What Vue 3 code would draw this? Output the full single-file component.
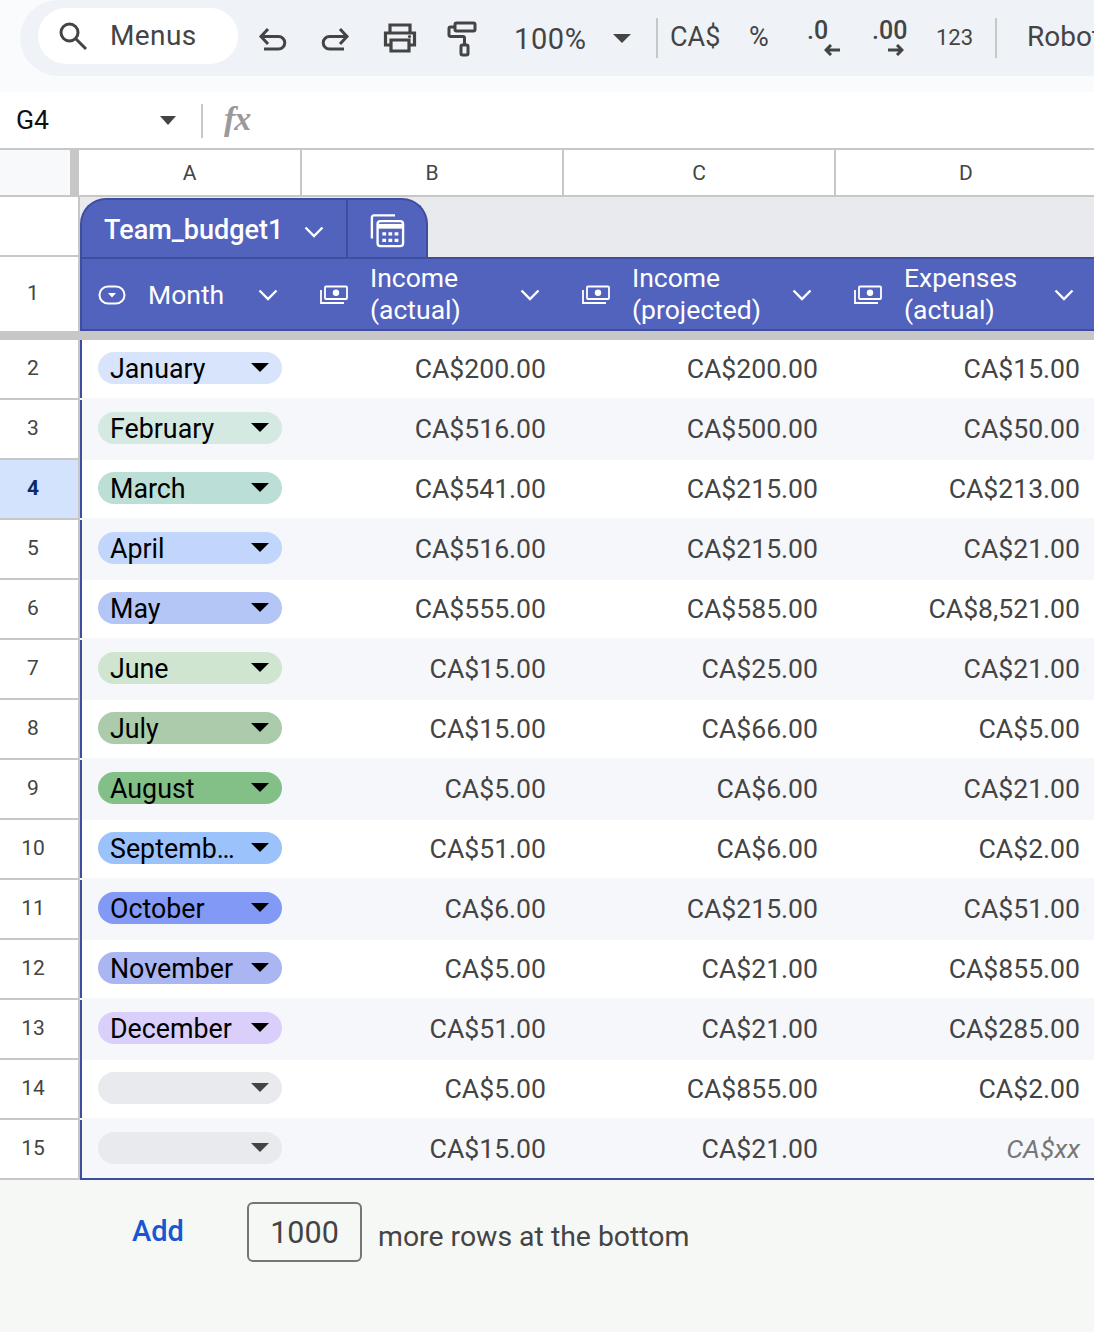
<script setup>
const rows = [
  { n: 2, m: 'January', c: '#d7e4fc', b: 'CA$200.00', p: 'CA$200.00', e: 'CA$15.00' },
  { n: 3, m: 'February', c: '#d4e9e2', b: 'CA$516.00', p: 'CA$500.00', e: 'CA$50.00' },
  { n: 4, m: 'March', c: '#bbdfd6', b: 'CA$541.00', p: 'CA$215.00', e: 'CA$213.00' },
  { n: 5, m: 'April', c: '#c2d6fc', b: 'CA$516.00', p: 'CA$215.00', e: 'CA$21.00' },
  { n: 6, m: 'May', c: '#b3c6f6', b: 'CA$555.00', p: 'CA$585.00', e: 'CA$8,521.00' },
  { n: 7, m: 'June', c: '#cfe5d0', b: 'CA$15.00', p: 'CA$25.00', e: 'CA$21.00' },
  { n: 8, m: 'July', c: '#abcbab', b: 'CA$15.00', p: 'CA$66.00', e: 'CA$5.00' },
  { n: 9, m: 'August', c: '#83c088', b: 'CA$5.00', p: 'CA$6.00', e: 'CA$21.00' },
  { n: 10, m: 'Septemb…', c: '#9cc2fc', b: 'CA$51.00', p: 'CA$6.00', e: 'CA$2.00' },
  { n: 11, m: 'October', c: '#829af6', b: 'CA$6.00', p: 'CA$215.00', e: 'CA$51.00' },
  { n: 12, m: 'November', c: '#aab6f2', b: 'CA$5.00', p: 'CA$21.00', e: 'CA$855.00' },
  { n: 13, m: 'December', c: '#dacffb', b: 'CA$51.00', p: 'CA$21.00', e: 'CA$285.00' },
  { n: 14, m: '', c: '#e8eaed', b: 'CA$5.00', p: 'CA$855.00', e: 'CA$2.00' },
  { n: 15, m: '', c: '#e8eaed', b: 'CA$15.00', p: 'CA$21.00', e: 'CA$xx', it: true },
]
const heads = [
  { l1: 'Income', l2: '(actual)' },
  { l1: 'Income', l2: '(projected)' },
  { l1: 'Expenses', l2: '(actual)' },
]
</script>

<template>
  <div class="page">
    <div class="topband">
      <div class="toolbar">
        <div class="search">
          <svg class="search-ic" width="32" height="32" viewBox="0 0 32 32" fill="none" stroke="#444" stroke-width="3">
            <circle cx="12.5" cy="12.5" r="8.5" />
            <path d="M18.5 18.5L29 29" />
          </svg>
          <span class="search-t">Menus</span>
        </div>
        <svg class="i-undo" width="30" height="30" viewBox="0 0 30 30" fill="none" stroke="#444" stroke-width="3">
          <path d="M10 5L3 12.500L10 20" />
          <path d="M3 12.500H20.500a6.300 6.300 0 0 1 0 12.600H6" />
        </svg>
        <svg class="i-redo" width="30" height="30" viewBox="0 0 30 30" fill="none" stroke="#444" stroke-width="3">
          <path d="M20 5L27 12.500L20 20" />
          <path d="M27 12.500H9.500a6.300 6.300 0 0 0 0 12.600H24" />
        </svg>
        <svg class="i-print" width="36" height="32" viewBox="0 0 36 32" fill="none" stroke="#444" stroke-width="3.200">
          <path d="M8 11V3H28V11" />
          <path d="M8 23H3.500V11H32.500V23H28" />
          <path d="M9 18H27V29H9Z" />
          <circle cx="27.500" cy="14.500" r="1.600" fill="#444" stroke="none" />
        </svg>
        <svg class="i-paint" width="32" height="36" viewBox="0 0 32 36" fill="none" stroke="#444" stroke-width="3">
          <rect x="9" y="2" width="20" height="8" rx="1.500" />
          <path d="M9 6H4.500a1.500 1.500 0 0 0-1.500 1.500V14a1.500 1.500 0 0 0 1.500 1.500H17a1.500 1.500 0 0 1 1.500 1.500V23" />
          <rect x="15" y="24" width="7" height="10" rx="1.500" />
        </svg>
        <span class="zoom">100%</span>
        <span class="caret dark zoom-c"></span>
        <span class="vdiv d1"></span>
        <span class="tb-t cad">CA$</span>
        <span class="tb-t pct">%</span>
        <div class="dec d-less">
          <span class="dec-t">.0</span>
          <svg class="arr-l" width="16" height="12" viewBox="0 0 16 12" fill="none" stroke="#444" stroke-width="3">
            <path d="M16 6H2M7 1L2 6L7 11" />
          </svg>
        </div>
        <div class="dec d-more">
          <span class="dec-t">.00</span>
          <svg class="arr-r" width="16" height="12" viewBox="0 0 16 12" fill="none" stroke="#444" stroke-width="3">
            <path d="M0 6H14M9 1L14 6L9 11" />
          </svg>
        </div>
        <span class="tb-t n123">123</span>
        <span class="vdiv d2"></span>
        <span class="tb-t font">Roboto</span>
      </div>
    </div>

    <div class="fbar">
      <span class="cellref">G4</span>
      <span class="caret dark ref-c"></span>
      <span class="fdiv"></span>
      <span class="fx">fx</span>
    </div>

    <div class="colhead">
      <div class="corner"></div>
      <div class="ch ca">A</div>
      <div class="ch cb">B</div>
      <div class="ch cc">C</div>
      <div class="ch cd">D</div>
    </div>

    <div class="tabrow">
      <div class="rh rh-tab"></div>
      <div class="tabzone">
        <div class="tab">
          <div class="tab-name">
            <span>Team_budget1</span>
            <svg class="chev" width="20" height="12" viewBox="0 0 20 12" fill="none" stroke="#fff" stroke-width="2.400"><path d="M1.500 1.500L10 10L18.500 1.500" /></svg>
          </div>
          <div class="tab-ic">
            <svg width="35" height="34" viewBox="0 0 36 36" fill="none" stroke="#fff" stroke-width="2.500">
              <path d="M1.500 26V3.500a2 2 0 0 1 2-2H26" />
              <rect x="7.500" y="7.500" width="27" height="26.500" rx="3" />
              <path d="M7.500 13H34.500" stroke-width="5" />
              <path d="M12.500 21h4M19 21h4M25.500 21h4M12.500 28h4M19 28h4M25.500 28h4" stroke-width="3.500" />
            </svg>
          </div>
        </div>
      </div>
    </div>

    <div class="headrow">
      <div class="rh rh-1">1</div>
      <div class="heads">
        <div class="hc ha">
          <svg class="ic" width="28" height="20" viewBox="0 0 28 20" fill="none" stroke="#fff" stroke-width="2">
            <rect x="1.500" y="1.500" width="25" height="17" rx="8.500" />
            <path d="M10 8H18L14 12.500Z" fill="#fff" stroke="none" />
          </svg>
          <span class="month">Month</span>
          <svg class="chev auto" width="20" height="12" viewBox="0 0 20 12" fill="none" stroke="#fff" stroke-width="2.400"><path d="M1.500 1.500L10 10L18.500 1.500" /></svg>
        </div>
        <div v-for="(h, i) in heads" :key="i" class="hc" :class="{ hd: i === 2 }">
          <svg class="ic" width="28" height="20" viewBox="0 0 28 20" fill="none" stroke="#fff" stroke-width="1.800">
            <path d="M1 5V18H24" />
            <rect x="5" y="1.500" width="22" height="12.500" rx="1" />
            <circle cx="16" cy="7.700" r="3.200" fill="#fff" stroke="none" />
          </svg>
          <span class="htxt">{{ h.l1 }}<br />{{ h.l2 }}</span>
          <svg class="chev auto" width="20" height="12" viewBox="0 0 20 12" fill="none" stroke="#fff" stroke-width="2.400"><path d="M1.500 1.500L10 10L18.500 1.500" /></svg>
        </div>
      </div>
    </div>
    <div class="freeze"></div>

    <div v-for="r in rows" :key="r.n" class="row">
      <div class="rh" :class="{ sel: r.n === 4 }">{{ r.n }}</div>
      <div class="data" :class="{ stripe: r.n % 2 === 1, last: r.n === 15 }">
        <div class="cell-a">
          <div class="chip" :style="{ background: r.c }">
            <span class="chip-t">{{ r.m }}</span>
            <span class="caret chip-c" :class="r.m ? 'black' : 'dark'"></span>
          </div>
        </div>
        <div class="val">{{ r.b }}</div>
        <div class="val">{{ r.p }}</div>
        <div class="val vd" :class="{ italic: r.it }">{{ r.e }}</div>
      </div>
    </div>

    <div class="footer">
      <span class="add">Add</span>
      <div class="count">1000</div>
      <span class="more">more rows at the bottom</span>
    </div>
  </div>
</template>

<style>
html, body { margin: 0; background: #fff; }
</style>

<style scoped>
.page {
  width: 1094px;
  height: 1332px;
  overflow: hidden;
  font-family: Roboto, "Liberation Sans", sans-serif;
  color: #444;
  background: #fff;
}
.topband { height: 92px; background: #f9fbfd; padding-left: 20px; box-sizing: border-box; }
.toolbar {
  height: 76px;
  width: 1074px;
  background: #eff3f8;
  border-radius: 38px 0 0 38px;
  display: flex;
  align-items: center;
  overflow: hidden;
  padding-left: 18px;
  box-sizing: border-box;
  white-space: nowrap;
}
.search {
  width: 200px;
  height: 56px;
  margin-top: -4px;
  border-radius: 28px;
  background: #fff;
  display: flex;
  align-items: center;
  padding-left: 19px;
  box-sizing: border-box;
  flex-shrink: 0;
}
.search-ic { flex-shrink: 0; }
.search-t { margin-left: 21px; font-size: 28px; letter-spacing: 0.4px; color: #444; margin-top: -1px; }
.i-undo { margin-left: 20px; flex-shrink: 0; margin-top: 2px; }
.i-redo { margin-left: 32px; flex-shrink: 0; margin-top: 2px; }
.i-print { margin-left: 32px; flex-shrink: 0; }
.i-paint { margin-left: 28px; flex-shrink: 0; margin-top: 2px; }
.zoom { margin-left: 36px; width: 73px; font-size: 29px; letter-spacing: 0.6px; flex-shrink: 0; margin-top: 2px; }
.caret {
  width: 0;
  height: 0;
  border-left: 9px solid transparent;
  border-right: 9px solid transparent;
  border-top: 9px solid #444;
  flex-shrink: 0;
}
.caret.black { border-top-color: #000; }
.caret.dark { border-top-color: #444; }
.chip-c { margin-top: -2px; }
.zoom-c { margin-left: 26px; }
.vdiv { width: 2px; height: 40px; background: #c7c7c7; flex-shrink: 0; }
.d1 { margin-left: 25px; }
.d2 { margin-left: 23px; }
.tb-t { flex-shrink: 0; font-size: 27px; margin-top: -2px; }
.cad { margin-left: 12px; width: 52px; }
.pct { margin-left: 27px; width: 22px; }
.dec { width: 33px; height: 40px; flex-shrink: 0; display: flex; flex-direction: column; }
.d-less { margin-left: 36px; }
.d-more { margin-left: 32px; }
.dec-t { font-size: 25px; font-weight: 500; line-height: 26px; }
.arr-l { margin-left: 17px; }
.arr-r { margin-left: 16px; }
.n123 { margin-left: 31px; width: 36px; font-size: 22px; }
.font { margin-left: 30px; font-size: 28px; margin-top: -4px; }

.fbar {
  height: 56px;
  display: flex;
  align-items: center;
  background: #fff;
  padding-left: 16px;
  box-sizing: border-box;
}
.cellref { width: 144px; font-size: 26.6px; color: #111; margin-top: -1px; }
.ref-c { margin-top: 0; border-left-width: 8px; border-right-width: 8px; }
.fdiv { width: 2px; height: 34px; background: #c7c7c7; margin-left: 25px; margin-top: 2px; }
.fx {
  margin-left: 21px;
  font-family: "Liberation Serif", serif;
  font-style: italic;
  font-weight: 700;
  font-size: 34px;
  color: #9a9a9a;
  letter-spacing: -1px;
  margin-top: -2px;
}
.colhead {
  height: 49px;
  display: flex;
  border-top: 2px solid #c7c7c7;
  border-bottom: 2px solid #c7c7c7;
  box-sizing: border-box;
  background: #fff;
}
.corner { width: 70px; background: #f8f9fa; border-right: 9px solid #c7c7c7; flex-shrink: 0; }
.ch {
  font-size: 21px;
  display: flex;
  align-items: center;
  justify-content: center;
  color: #444;
  border-right: 2px solid #c7c7c7;
  box-sizing: border-box;
  flex-shrink: 0;
}
.ca { width: 223px; }
.cb { width: 262px; }
.cc { width: 272px; }
.cd { width: 258px; border-right: 0; padding-left: 2px; }

.tabrow { height: 60px; display: flex; }
.rh {
  width: 80px;
  flex-shrink: 0;
  box-sizing: border-box;
  border-right: 2px solid #c7c7c7;
  border-bottom: 2px solid #c7c7c7;
  font-size: 21px;
  display: flex;
  align-items: center;
  justify-content: center;
  padding: 0 12px 2px 0;
  color: #444;
  background: #fff;
}
.rh-tab { padding: 0; }
.tabzone { flex: 1; background: #e8eaed; padding-top: 1px; box-sizing: border-box; }
.tab {
  width: 348px;
  height: 59px;
  box-sizing: border-box;
  background: #5263bd;
  border: 2px solid #3f4d9e;
  border-bottom: 0;
  border-radius: 26px 26px 0 0;
  display: flex;
  color: #fff;
}
.tab-name {
  width: 266px;
  box-sizing: border-box;
  border-right: 2px solid #3f4d9e;
  display: flex;
  align-items: center;
  padding: 2px 0 0 22px;
  font-size: 27px;
  font-weight: 500;
}
.tab-name .chev { margin-left: 21px; margin-top: 4px; }
.tab-ic { flex: 1; display: flex; align-items: center; justify-content: center; padding: 4px 0 0 1px; }

.headrow { height: 74px; display: flex; }
.rh-1 { border-bottom: 0; padding-bottom: 2px; }
.heads {
  flex: 1;
  display: grid;
  grid-template-columns: 220px 262px 272px 258px;
  background: #5263bd;
  border: 2px solid #3f4d9e;
  border-right: 0;
  box-sizing: border-box;
  color: #fff;
}
.hc {
  display: flex;
  align-items: center;
  padding: 0 24px 0 18px;
  box-sizing: border-box;
  min-width: 0;
}
.ha { padding-left: 16px; }
.hd { padding-right: 20px; }
.ic { flex-shrink: 0; margin-top: 2px; }
.month { margin-left: 22px; font-size: 26.5px; margin-top: 1px; }
.htxt { margin-left: 22px; font-size: 26.5px; line-height: 32px; white-space: nowrap; }
.chev { flex-shrink: 0; }
.auto { margin-left: auto; margin-top: 2px; }
.freeze { height: 9px; background: #c7c7c7; }

.row { height: 60px; display: flex; }
.rh.sel { background: #d3e3fd; color: #0b2a66; font-weight: 700; }
.data {
  flex: 1;
  display: grid;
  grid-template-columns: 220px 262px 272px 258px;
  border-left: 2px solid #3f4d9e;
  box-sizing: border-box;
  padding-bottom: 4px;
  align-items: center;
  min-width: 0;
}
.stripe { background: #f6f7fa; box-shadow: 0 -2px 0 #f6f7fa; }
.last { border-bottom: 2px solid #3f4d9e; padding-bottom: 2px; }
.cell-a { padding-left: 16px; }
.chip {
  width: 184px;
  height: 32px;
  border-radius: 16px;
  display: flex;
  align-items: center;
  box-sizing: border-box;
  padding-left: 12px;
}
.chip-t { width: 141px; font-size: 26.8px; color: #000; white-space: nowrap; line-height: 32px; margin-top: 1px; }
.val { text-align: right; padding-right: 18px; font-size: 26.6px; color: #444; white-space: nowrap; }
.vd { padding-right: 14px; }
.italic { font-style: italic; color: #777; }

.footer {
  height: 152px;
  background: #f6f8f6;
  display: flex;
  align-items: flex-start;
  padding: 22px 0 0 132px;
  box-sizing: border-box;
}
.add { font-size: 29px; font-weight: 500; color: #1a56d0; width: 115px; margin-top: 12px; }
.count {
  width: 115px;
  height: 60px;
  box-sizing: border-box;
  border: 2px solid #747775;
  border-radius: 6px;
  font-size: 30.5px;
  display: flex;
  align-items: center;
  justify-content: center;
  color: #444;
}
.more { margin-left: 16px; font-size: 28.4px; margin-top: 18px; color: #444; }
</style>
